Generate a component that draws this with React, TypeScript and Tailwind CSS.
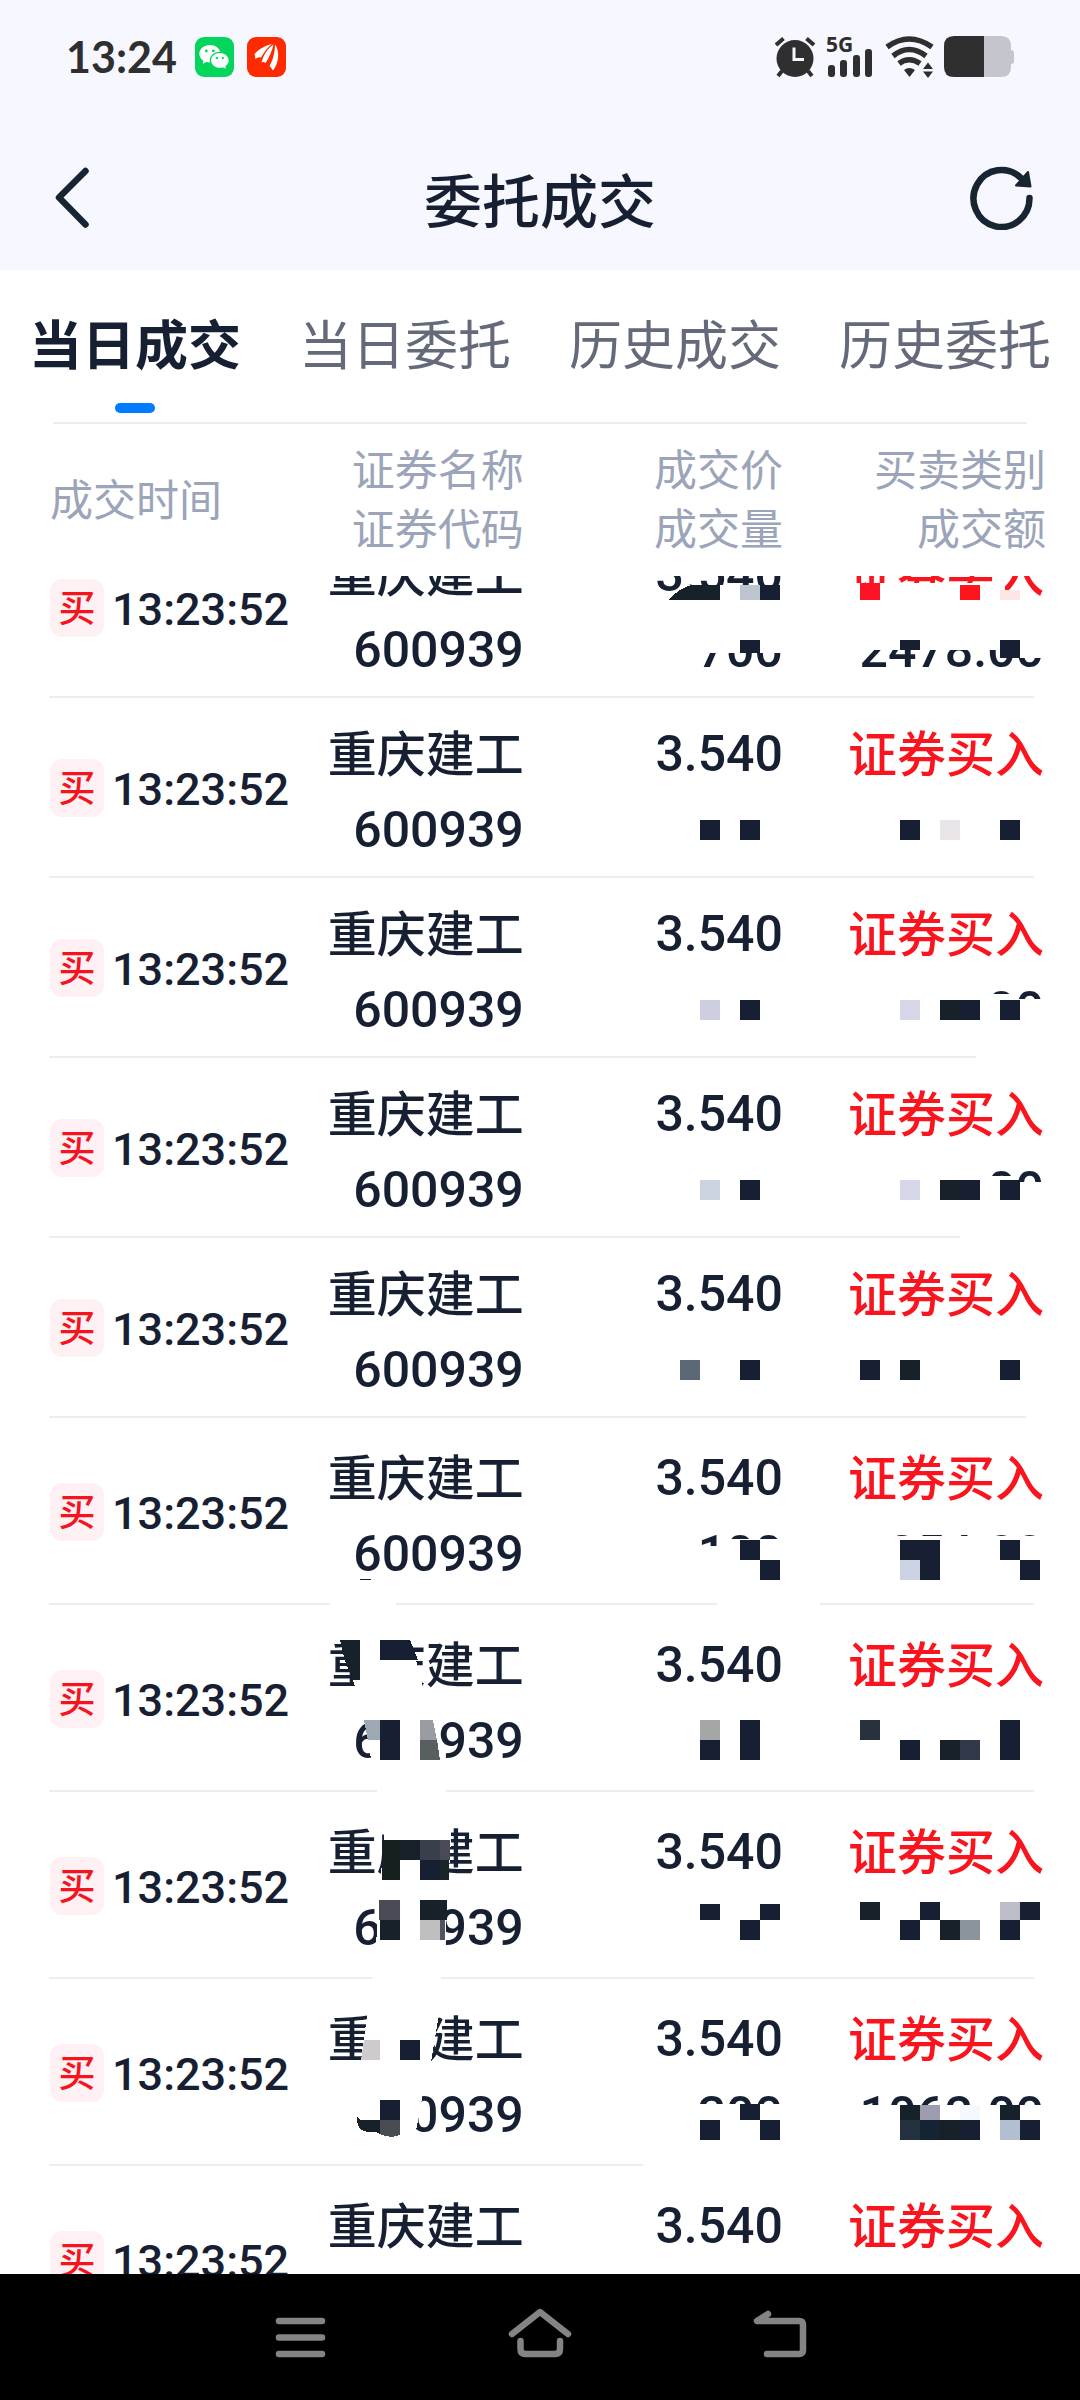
import React, { useLayoutEffect, useRef, useState } from 'react';
import { RiWechatFill } from 'react-icons/ri';

interface Deal {
  time: string;
  name: string;
  code: string;
  price: string;
  volume: string;
  side: string;
  amount: string;
  tall?: boolean;
}

const tabs = ['当日成交', '当日委托', '历史成交', '历史委托'];

const base = { time: '13:23:52', name: '重庆建工', code: '600939', price: '3.540', side: '证券买入', volume: '', amount: '' };

const deals: Deal[] = [
  { ...base, volume: '700', amount: '2478.00' },
  { ...base },
  { ...base, amount: '00' },
  { ...base, amount: '00' },
  { ...base },
  { ...base, volume: '100', amount: '354.00', tall: true },
  { ...base, tall: true },
  { ...base, tall: true },
  { ...base, volume: '300', amount: '1062.00', tall: true },
  { ...base, tall: true },
];

const INK = '#172032';
const SLATE = '#16212a';

// areas wiped out before the blocks are painted
const wiped = [
  '680,585 790,585 790,600 680,600',
  '845,583 1005,583 1005,600 845,600',
  '690,625 790,625 790,653 690,653',
  '855,625 1045,625 1045,658 1020,658 1020,650 855,650',
  '980,994 1016,994 1016,999 1045,999 1045,1035 980,1035',
  '980,1176 1016,1176 1016,1182 1045,1182 1045,1215 980,1215',
  '976,1054 1040,1054 1040,1060 976,1060',
  '960,1234 1040,1234 1040,1240 960,1240',
  '1026,1414 1040,1414 1040,1421 1026,1421',
  '695,1546 719,1546 719,1539 790,1539 790,1585 695,1585',
  '890,1536 1045,1536 1045,1585 890,1585',
  '330,1600 396,1600 396,1608 330,1608',
  '717,1600 820,1600 820,1608 717,1608',
  '338,1635 410,1635 424,1692 357,1692',
  '364,1715 433,1715 441,1765 372,1765',
  '377,1787 446,1787 446,1795 377,1795',
  '385,1822 452,1822 448,1888 380,1888',
  '379,1898 448,1898 445,1945 376,1945',
  '372,1974 441,1974 441,1982 372,1982',
  '368,2008 440,2008 430,2068 360,2068',
  '350,2088 424,2088 414,2142 350,2142',
  '690,2104 790,2104 790,2140 690,2140',
  '850,2105 1045,2105 1045,2140 850,2140',
  '643,2161 1040,2161 1040,2169 643,2169',
];

// [x, y, width, height, colour]
const blocks: [number, number, number, number, string][] = [
  [740, 585, 20, 15, '#bec3d0'], [760, 585, 20, 15, INK],
  [860, 583, 20, 17, '#fd1424'], [960, 585, 20, 15, '#fd141c'], [1000, 590, 20, 10, '#fde6e6'],
  [740, 640, 20, 13, INK], [900, 640, 20, 10, INK], [1000, 640, 20, 18, INK],
  [700, 820, 20, 20, INK], [740, 820, 20, 20, INK], [900, 820, 20, 20, INK], [940, 820, 20, 20, '#e8e4e7'], [1000, 820, 20, 20, INK],
  [700, 1000, 20, 20, '#cdcfe0'], [740, 1000, 20, 20, INK], [900, 1000, 20, 20, '#d6d7e8'], [940, 1000, 20, 20, SLATE], [960, 1000, 20, 20, INK], [1000, 1000, 20, 20, INK],
  [700, 1180, 20, 20, '#ccd3e0'], [740, 1180, 20, 20, INK], [900, 1180, 20, 20, '#d6d7e8'], [940, 1180, 20, 20, SLATE], [960, 1180, 20, 20, INK], [1000, 1180, 20, 20, INK],
  [680, 1360, 20, 20, '#5c6876'], [740, 1360, 20, 20, INK], [860, 1360, 20, 20, INK], [900, 1360, 20, 20, SLATE], [1000, 1360, 20, 20, INK],
  [740, 1540, 20, 20, INK], [760, 1560, 20, 20, INK], [900, 1540, 40, 20, INK], [900, 1560, 20, 20, '#ccd2e1'], [920, 1560, 20, 20, INK], [1000, 1540, 20, 20, INK], [1020, 1560, 20, 20, INK],
  [360, 1579, 11, 1, INK],
  [700, 1720, 20, 20, '#a4a7a6'], [700, 1740, 20, 20, INK], [740, 1720, 20, 40, INK], [860, 1720, 20, 20, '#28323c'], [900, 1740, 20, 20, INK], [940, 1740, 20, 20, SLATE], [960, 1740, 20, 20, '#31394b'], [1000, 1720, 20, 40, INK],
  [380, 1720, 20, 40, INK],
  [382, 1840, 18, 40, '#16211f'], [400, 1840, 20, 20, SLATE], [420, 1840, 20, 20, '#393f4c'], [440, 1840, 10, 20, '#484b57'], [420, 1860, 20, 20, INK], [440, 1860, 9, 20, '#1a2529'],
  [379, 1900, 21, 20, '#4a4c55'], [380, 1920, 20, 20, SLATE], [420, 1900, 27, 20, SLATE], [420, 1920, 20, 20, '#bfbfbf'], [440, 1920, 5, 20, '#4f5661'],
  [700, 1904, 20, 16, INK], [760, 1904, 20, 16, INK], [740, 1920, 20, 20, INK],
  [860, 1902, 20, 18, SLATE], [920, 1902, 20, 18, INK], [900, 1920, 20, 20, INK], [940, 1920, 20, 20, SLATE], [960, 1920, 20, 20, '#8b949c'], [1000, 1902, 20, 18, '#bcbdc7'], [1020, 1902, 20, 18, INK], [1000, 1920, 20, 20, INK],
  [400, 2040, 20, 20, INK], [380, 2100, 20, 20, INK],
  [740, 2104, 20, 16, INK], [700, 2120, 20, 20, INK], [760, 2120, 20, 20, INK],
  [900, 2105, 20, 15, SLATE], [920, 2105, 20, 15, '#9d9daf'], [960, 2105, 20, 15, '#f3f9ff'], [1000, 2105, 20, 15, SLATE],
  [900, 2120, 20, 20, '#243240'], [920, 2120, 20, 20, '#152433'], [940, 2120, 20, 20, '#172026'], [960, 2120, 20, 20, INK], [1000, 2120, 20, 20, '#b2bfd1'], [1020, 2120, 20, 20, INK],
];

const Mosaic = () => (
  <svg
    viewBox="0 366 1080 1987"
    preserveAspectRatio="none"
    className="absolute inset-0 w-full h-full z-10 pointer-events-none"
    shapeRendering="crispEdges"
    aria-hidden="true"
  >
    {wiped.map((points) => <polygon key={points} points={points} fill="#fff" />)}
    {blocks.map(([x, y, w, h, fill]) => <rect key={`${x}-${y}`} x={x} y={y} width={w} height={h} fill={fill} />)}
    <path d="M669 600Q680 587 692 585H720V600Z" fill={SLATE} />
    <path d="M340 1640H360V1680H353Q344 1662 340 1640Z" fill={SLATE} />
    <path d="M380 1640H410L418 1660H380Z" fill={INK} />
    <path d="M364 1720H380V1740H368Z" fill="#9eaab3" />
    <path d="M420 1720H433L437 1740H420Z" fill="#9a9ca4" />
    <path d="M420 1740H437L440 1760H420Z" fill="#575f60" />
    <path d="M364 2040H380V2060H361Z" fill="#cfcace" />
    <path d="M357 2116Q360 2121 363 2120H380V2134Q375 2131 370 2132Q356 2132 357 2116Z" fill={SLATE} />
    <path d="M380 2120H400V2135Q390 2139 380 2134Z" fill="#4a4c54" />
  </svg>
);

const StatusBar = () => (
  <div className="flex items-center justify-between h-[114px] pl-[66px] pr-[66px] text-[#2f2f2f]">
    <div className="flex items-center">
      <span className="font-['Lato'] font-bold text-[43px] leading-[48px] mr-[18px]">13:24</span>
      <span className="flex items-center justify-center w-[39px] h-[40px] rounded-[9px] bg-[#04d65c] text-white mr-[13px]">
        <RiWechatFill className="w-8 h-8" />
      </span>
      <svg viewBox="0 0 39 40" className="w-[39px] h-[40px]">
        <rect width="39" height="40" rx="9" fill="#ff2a00" />
        <path d="M25 7C17 9 11 13 7.500 17L8.500 22Q11 19.500 14 20.500C17 15 20 11 25 7Z" fill="#fff" />
        <path d="M26.500 7.500C20 12 16.500 18 14.500 25.500Q16.500 24.500 18.500 26C22 21 25 14 26.500 7.500Z" fill="#fff" />
        <path d="M28 7.500C28 15 26 23 22.500 29Q24 30 26 33.500C32 26 33 14 28 7.500Z" fill="#fff" />
      </svg>
    </div>
    <div className="flex items-center">
      <svg viewBox="0 0 42 42" className="w-[42px] h-[42px] mr-[10px]">
        <circle cx="21" cy="22.500" r="18.500" fill="currentColor" />
        <path d="M2 9L9.500 2.500M40 9L32.500 2.500M8 35L4 40M34 35L38 40" stroke="currentColor" strokeWidth="4" fill="none" />
        <path d="M20 11.500V23.500H30" stroke="#f7f7ff" strokeWidth="3" fill="none" />
      </svg>
      <div className="relative w-[48px] h-[42px] mr-[11px]">
        <span className="absolute left-0 top-0 font-['Noto_Sans'] font-bold text-[21px] leading-[17px]">5G</span>
        <svg viewBox="0 0 48 42" className="w-full h-full">
          <rect x="2" y="29" width="7" height="12" rx="3" fill="currentColor" />
          <rect x="14" y="24" width="7" height="17" rx="3" fill="currentColor" />
          <rect x="27" y="19" width="7" height="22" rx="3" fill="currentColor" />
          <rect x="39" y="13" width="7" height="28" rx="3" fill="currentColor" />
        </svg>
      </div>
      <svg viewBox="0 0 50 42" className="w-[50px] h-[42px] mr-[9px]" fill="none" stroke="currentColor" strokeWidth="5.500">
        <path d="M2 11Q24 -5 47 11M8 20Q24 7 41 20M14 27.500Q24 20 35 27.500" />
        <path d="M19 34Q24 30 30 34L24.500 41Z" fill="currentColor" stroke="none" />
        <path d="M38 33L43 26.500L48 33ZM38 35.500H48L43 42Z" fill="currentColor" stroke="none" />
      </svg>
      <svg viewBox="0 0 70 42" className="w-[70px] h-[42px]">
        <rect x="58" y="14" width="12" height="14" rx="3" fill="#c5c5ce" />
        <path d="M40 0H57Q67 0 67 10V31Q67 41 57 41H40Z" fill="#c5c5ce" />
        <path d="M40 0H10Q0 0 0 10V31Q0 41 10 41H40Z" fill="currentColor" />
      </svg>
    </div>
  </div>
);

const TitleBar = () => (
  <header className="flex items-center justify-between h-[156px] pt-3 px-[46px] text-[#172431]">
    <button type="button" aria-label="返回" className="w-[64px] h-[64px]">
      <svg viewBox="-4 0 64 64" className="w-full h-full" fill="none" stroke="currentColor" strokeWidth="6.500" strokeLinecap="round" strokeLinejoin="round">
        <path d="M35.500 5L9 31.500L35.500 58.500" />
      </svg>
    </button>
    <h1 className="text-[58px] leading-[64px] font-medium text-[#172032]">委托成交</h1>
    <button type="button" aria-label="刷新" className="w-[64px] h-[64px]">
      <svg viewBox="0 0 64 64" className="w-full h-full" fill="none" stroke="currentColor" strokeWidth="6.500" strokeLinecap="round">
        <path d="M59.500 32A28 28.500 0 1 1 51 12" />
        <path d="M58 6L60.500 20.500L46 19.500Z" fill="currentColor" strokeWidth="2" strokeLinejoin="round" />
      </svg>
    </button>
  </header>
);

const DealRow = ({ deal }: { deal: Deal }) => (
  <tr className={deal.tall ? 'relative h-[187px] align-middle' : 'relative h-[180px] align-middle'}>
    <td className="p-0 pl-[50px]">
      <div className="flex items-center gap-2">
        <span className="flex items-center justify-center w-[54px] h-[58px] rounded-xl bg-[#fff0f3] text-[#f5141e] text-[37px] leading-[54px] pt-1">买</span>
        <span className="text-[45px] leading-[56px] pt-1">{deal.time}</span>
      </div>
    </td>
    <td className="p-0 pt-2 text-right">
      <div className="h-[76px] pt-[2px] text-[49px]">{deal.name}</div>
      <div className="h-[76px]">{deal.code}</div>
    </td>
    <td className="p-0 pt-2 text-right">
      <div className="h-[76px]">{deal.price}</div>
      <div className="h-[76px]">{deal.volume}</div>
    </td>
    <td className="p-0 pt-2 pr-9 text-right">
      <div className="h-[76px] pt-[2px] text-[49px] text-[#fa141e]">{deal.side}</div>
      <div className="h-[76px]">{deal.amount}</div>
      <span className="absolute bottom-0 left-[49px] right-[46px] h-[2px] bg-[#ededed]"></span>
    </td>
  </tr>
);

const DealTable = () => {
  const listRef = useRef<HTMLDivElement>(null);

  useLayoutEffect(() => {
    if (listRef.current) listRef.current.scrollTop = 58;
  }, []);

  return (
    <div ref={listRef} className="flex-1 min-h-0 overflow-y-auto [scrollbar-width:none]">
      <div className="relative">
        <table className="w-full table-fixed border-separate border-spacing-0">
          <colgroup>
            <col className="w-[28%]" />
            <col className="w-[20.5%]" />
            <col className="w-[24%]" />
            <col className="w-[27.5%]" />
          </colgroup>
          <thead className="sticky top-0 z-20 bg-white text-[43px] leading-[59px] text-[#9ba4b9]">
            <tr className="h-[152px] align-middle">
              <th className="p-0 pb-[6px] pl-[50px] text-left font-normal">成交时间</th>
              <th className="p-0 pb-[6px] text-right font-normal">证券名称<br />证券代码</th>
              <th className="p-0 pb-[6px] text-right font-normal">成交价<br />成交量</th>
              <th className="p-0 pb-[6px] pr-[34px] text-right font-normal">买卖类别<br />成交额</th>
            </tr>
          </thead>
          <tbody className="font-['Roboto','Noto_Sans_CJK_SC',sans-serif] font-medium text-[50px] leading-[76px] text-[#172032]">
            {deals.map((deal, i) => <DealRow key={i} deal={deal} />)}
          </tbody>
        </table>
        <Mosaic />
      </div>
    </div>
  );
};

const NavBar = () => (
  <nav className="flex items-center justify-center gap-[176px] h-[126px] bg-black text-[#858385]">
    <button type="button" aria-label="菜单" className="w-16 h-16">
      <svg viewBox="0 0 64 64" className="w-full h-full" stroke="currentColor" strokeWidth="6.500" strokeLinecap="round">
        <path d="M11 16H54M11 32.500H54M11 49H54" />
      </svg>
    </button>
    <button type="button" aria-label="主页" className="w-16 h-16">
      <svg viewBox="0 0 64 64" className="w-full h-full" fill="none" stroke="currentColor" strokeWidth="6.500" strokeLinecap="round" strokeLinejoin="round">
        <path d="M4 29L32 7L60 29M12.500 36V44Q12.500 49 17.500 49H47Q52 49 52 44V36" />
      </svg>
    </button>
    <button type="button" aria-label="后退" className="w-16 h-16">
      <svg viewBox="0 0 64 64" className="w-full h-full" fill="none" stroke="currentColor" strokeWidth="6.500" strokeLinecap="round" strokeLinejoin="round">
        <path d="M20 9L9 16H51Q55 16 55 20V45Q55 49 51 49H19" />
      </svg>
    </button>
  </nav>
);

const App: React.FC = () => {
  const [active, setActive] = useState(0);

  return (
    <div className="flex flex-col h-screen bg-white font-['Noto_Sans_CJK_SC',sans-serif]">
      <div className="bg-[#f7f7ff]">
        <StatusBar />
        <TitleBar />
      </div>
      <div className="relative grid grid-cols-4 h-[154px]">
        {tabs.map((tab, i) => (
          <button
            key={tab}
            type="button"
            onClick={() => setActive(i)}
            className={i === active
              ? 'flex flex-col items-center pt-9 text-[53px] leading-[72px] font-bold text-[#172032]'
              : 'flex flex-col items-center pt-9 text-[53px] leading-[72px] text-[#646a7a]'}
          >
            {tab}
            {i === active && <span className="w-10 h-[10px] mt-[25px] rounded-full bg-[#007dff]"></span>}
          </button>
        ))}
        <span className="absolute bottom-0 left-[53px] right-[53px] h-[2px] bg-[#ededed]"></span>
      </div>
      <DealTable />
      <NavBar />
    </div>
  );
};

export default App;
